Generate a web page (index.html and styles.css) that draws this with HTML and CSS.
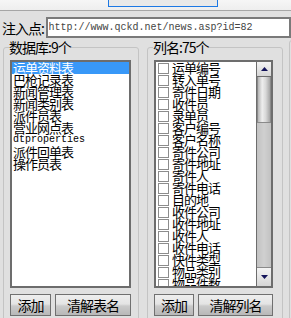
FILE: index.html
```html
<html>
    <head>
        <title>注入点</title>
        <link rel="stylesheet" href="styles.css">
    </head>
    <body>
        <div class="topbar"><div class="tab"></div></div>
        <div class="url-row">
            <span class="url-label">注入点:</span>
            <input class="url-field" type="text" value="http://www.qckd.net/news.asp?id=82">
        </div>
        <div class="groups">
            <fieldset class="group group-left">
                <legend>数据库:9个</legend>
                <div class="listbox">
                    <div class="item selected">运单资料表</div>
                    <div class="item">巴枪记录表</div>
                    <div class="item">新闻管理表</div>
                    <div class="item">新闻类别表</div>
                    <div class="item">派件员表</div>
                    <div class="item">营业网点表</div>
                    <div class="item latin">dtproperties</div>
                    <div class="item">派件回单表</div>
                    <div class="item">操作员表</div>
                </div>
                <div class="buttons">
                    <button class="btn btn-add">添加</button>
                    <button class="btn btn-wide">清解表名</button>
                </div>
            </fieldset>
            <fieldset class="group group-right">
                <legend>列名:75个</legend>
                <div class="listbox checklist">
                    <div class="rows">
                        <div class="row"><span class="check"></span>运单编号</div>
                        <div class="row"><span class="check"></span>转入单号</div>
                        <div class="row"><span class="check"></span>寄件日期</div>
                        <div class="row"><span class="check"></span>收件员</div>
                        <div class="row"><span class="check"></span>录单员</div>
                        <div class="row"><span class="check"></span>客户编号</div>
                        <div class="row"><span class="check"></span>客户名称</div>
                        <div class="row"><span class="check"></span>寄件公司</div>
                        <div class="row"><span class="check"></span>寄件地址</div>
                        <div class="row"><span class="check"></span>寄件人</div>
                        <div class="row"><span class="check"></span>寄件电话</div>
                        <div class="row"><span class="check"></span>目的地</div>
                        <div class="row"><span class="check"></span>收件公司</div>
                        <div class="row"><span class="check"></span>收件地址</div>
                        <div class="row"><span class="check"></span>收件人</div>
                        <div class="row"><span class="check"></span>收件电话</div>
                        <div class="row"><span class="check"></span>快件类型</div>
                        <div class="row"><span class="check"></span>物品类别</div>
                        <div class="row"><span class="check"></span>物品件数</div>
                    </div>
                    <div class="scrollbar">
                        <div class="sb-btn sb-up">
                            <svg width="7" height="4" viewBox="0 0 7 4"><polygon points="0,4 7,4 3.5,0" fill="#14145a"/></svg>
                        </div>
                        <div class="sb-thumb"></div>
                        <div class="sb-track"></div>
                        <div class="sb-btn sb-down">
                            <svg width="7" height="4" viewBox="0 0 7 4"><polygon points="0,0 7,0 3.5,4" fill="#14145a"/></svg>
                        </div>
                    </div>
                </div>
                <div class="buttons">
                    <button class="btn btn-add">添加</button>
                    <button class="btn btn-wide">清解列名</button>
                </div>
            </fieldset>
            <fieldset class="group group-extra"></fieldset>
        </div>
    </body>
</html>
```

FILE: styles.css
```css
body {
    margin: 0;
    width: 291px;
    height: 318px;
    overflow: hidden;
    background: #e0e0e0;
    font-family: "Noto Sans CJK SC", "Liberation Sans", sans-serif;
    color: #000;
}

.topbar {
    height: 10px;
    background: linear-gradient(#f6f6f6, #eeeeee);
    border-bottom: 1px solid #a6a6a6;
    overflow: hidden;
}

.topbar .tab {
    margin-left: 108px;
    margin-top: -15px;
    width: 108px;
    height: 20px;
    border: 1px solid #1c78e4;
    background: #e9e9e9;
}

.url-row {
    display: flex;
    align-items: center;
    margin-top: 6px;
    padding-left: 2px;
}

.url-label {
    width: 48px;
    font-size: 14px;
    line-height: 16px;
    letter-spacing: -1px;
}

.url-field {
    width: 270px;
    height: 21px;
    margin: 0;
    padding: 0 1px;
    border: 2px solid #7a7a7a;
    background: #fff;
    font-family: "Liberation Mono", monospace;
    font-size: 10px;
    color: #444;
    outline: none;
}

.groups {
    display: flex;
    margin-top: 2px;
}

.group {
    flex-shrink: 0;
    box-sizing: border-box;
    width: 136px;
    height: 300px;
    margin: 0;
    padding: 6px 7px 0 6px;
    border: 1px solid #c4c4c4;
    border-radius: 3px;
    min-width: 0;
}

.group legend {
    padding: 0;
    margin-left: -1px;
    font-size: 14px;
    line-height: 14px;
    letter-spacing: -1px;
}

.group-left {
    margin-left: 3px;
}

.group-right {
    margin-left: 8px;
    padding-right: 9px;
}

.group-extra {
    margin-left: 6px;
    width: 60px;
}

.listbox {
    box-sizing: border-box;
    height: 228px;
    border: 2px solid #6d6d6d;
    background: #fff;
    overflow: hidden;
}

.item {
    height: 12px;
    padding-left: 1px;
    font-size: 13px;
    line-height: 12px;
    letter-spacing: -1px;
    white-space: nowrap;
}

.item.selected {
    background: #3898f8;
    color: #fff;
}

.item.latin {
    font-family: "Liberation Mono", monospace;
    font-size: 10px;
    letter-spacing: 0;
}

.checklist {
    display: flex;
}

.rows {
    flex: 1;
    overflow: hidden;
}

.row {
    display: flex;
    align-items: center;
    height: 12px;
    padding-left: 2px;
    font-size: 13px;
    line-height: 12px;
    letter-spacing: -1px;
    white-space: nowrap;
}

.check {
    flex-shrink: 0;
    box-sizing: border-box;
    width: 11px;
    height: 11px;
    margin-right: 3px;
    border: 1px solid #8c8c8c;
    background: #fff;
}

.scrollbar {
    display: flex;
    flex-direction: column;
    width: 14px;
    border-left: 1px solid #6d6d6d;
    background: #c6c6c6;
}

.sb-btn {
    display: flex;
    align-items: center;
    justify-content: center;
    background: linear-gradient(#f4f4f4, #d6d6d6);
}

.sb-up {
    height: 14px;
    border-bottom: 1px solid #6d6d6d;
}

.sb-down {
    height: 18px;
    border-top: 1px solid #8a8a8a;
}

.sb-thumb {
    box-sizing: border-box;
    height: 46px;
    border: 1px solid #8a8a8a;
    border-top: none;
    background: linear-gradient(to right, #b4b4b4, #eeeeee 35%, #d8d8d8 65%, #a6a6a6);
}

.sb-track {
    flex: 1;
    background: linear-gradient(to right, #c2c2c2, #d0d0d0 50%, #c2c2c2);
}

.buttons {
    display: flex;
    gap: 4px;
    margin-top: 6px;
}

.btn {
    box-sizing: border-box;
    height: 22px;
    padding: 0;
    border: 1px solid #707070;
    background: linear-gradient(#eeeeee, #e4e4e4 45%, #cacaca 55%, #b8b8b8);
    font-family: "Noto Sans CJK SC", sans-serif;
    font-size: 14px;
    letter-spacing: -1px;
    color: #000;
}

.btn-add {
    width: 41px;
}

.group-right .btn-add {
    width: 40px;
}

.btn-wide {
    flex: 1;
}
```
